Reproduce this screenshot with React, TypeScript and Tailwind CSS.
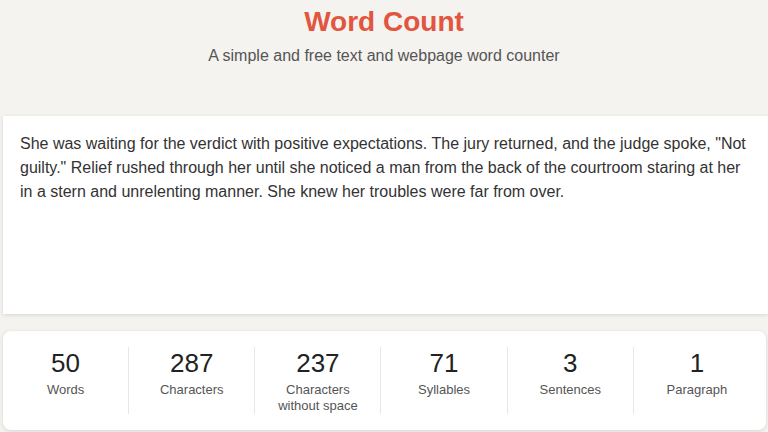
import React from 'react'

const text =
  'She was waiting for the verdict with positive expectations. The jury returned, and the judge spoke, "Not guilty." Relief rushed through her until she noticed a man from the back of the courtroom staring at her in a stern and unrelenting manner. She knew her troubles were far from over.'

const stats = [
  { value: '50', label: 'Words' },
  { value: '287', label: 'Characters' },
  { value: '237', label: 'Characters without space' },
  { value: '71', label: 'Syllables' },
  { value: '3', label: 'Sentences' },
  { value: '1', label: 'Paragraph' },
]

export default function App() {
  return (
    <div className="w-[768px] h-[432px] overflow-hidden bg-[#f4f3ef] font-['Liberation_Sans',Arial,sans-serif]">
      {/* Header */}
      <header className="pt-[6px] h-[116px] text-center">
        <h1 className="text-[28px] leading-[32px] font-bold text-[#e2553e]">Word Count</h1>
        <p className="mt-[6px] text-[16px] leading-[24px] text-[#555]">
          A simple and free text and webpage word counter
        </p>
      </header>

      {/* Text area */}
      <div className="ml-[3px] h-[198px] bg-white shadow-[0_1px_4px_rgba(0,0,0,0.12)] pl-[17px] pr-[16px] pt-4">
        <p className="text-[16px] leading-[24px] text-[#333]">{text}</p>
      </div>

      {/* Stats */}
      <div className="mt-[17px] ml-[3px] w-[763px] bg-white rounded-lg shadow-[0_1px_4px_rgba(0,0,0,0.12)] py-4 pr-[6px]">
        <div className="grid grid-cols-6">
          {stats.map((s, i) => (
            <div
              key={s.label}
              className={`h-[67px] flex flex-col items-center text-center ${i < stats.length - 1 ? 'border-r border-[#e6e6e6]' : ''}`}
            >
              <div className="text-[26px] leading-[32px] text-[#222]">{s.value}</div>
              <div className="mt-[3px] px-[10px] text-[13px] leading-[16px] text-[#555]">{s.label}</div>
            </div>
          ))}
        </div>
      </div>
    </div>
  )
}
